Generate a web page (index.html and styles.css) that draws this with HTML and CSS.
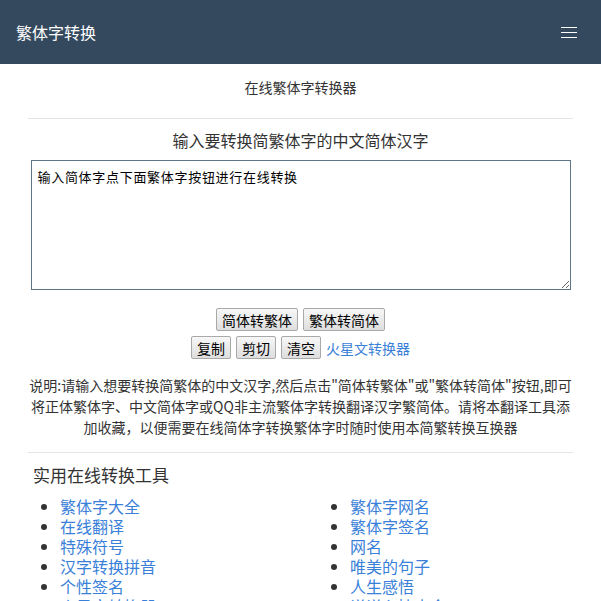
FILE: index.html
```html
<!DOCTYPE html>
<html lang="zh-CN">
    <head>
        <title>繁体字转换</title>
        <meta charset="utf-8">
        <meta name="viewport" content="width=device-width, initial-scale=1">
        <link rel="stylesheet" href="styles.css">
    </head>
    <body>
        <div class="navbar">
            <a class="brand" href="#">繁体字转换</a>
            <button class="toggle" type="button">
                <span></span>
                <span></span>
                <span></span>
            </button>
        </div>
        <div class="container">
            <div class="subtitle">在线繁体字转换器</div>
            <hr>
            <h3 class="title">输入要转换简繁体字的中文简体汉字</h3>
            <textarea class="input" id="content">输入简体字点下面繁体字按钮进行在线转换</textarea>
            <div class="actions">
                <div class="row">
                    <button class="btn" type="button">简体转繁体</button>
                    <button class="btn" type="button">繁体转简体</button>
                </div>
                <div class="row">
                    <button class="btn" type="button">复制</button>
                    <button class="btn" type="button">剪切</button>
                    <button class="btn" type="button">清空</button>
                    <a href="#">火星文转换器</a>
                </div>
            </div>
            <p class="desc">说明:请输入想要转换简繁体的中文汉字,然后点击"简体转繁体"或"繁体转简体"按钮,即可将正体繁体字、中文简体字或QQ非主流繁体字转换翻译汉字繁简体。请将本翻译工具添加收藏，以便需要在线简体字转换繁体字时随时使用本简繁转换互换器</p>
            <hr>
            <h4 class="tools-title">实用在线转换工具</h4>
            <ul class="tools">
                <li><a href="#">繁体字大全</a></li>
                <li><a href="#">繁体字网名</a></li>
                <li><a href="#">在线翻译</a></li>
                <li><a href="#">繁体字签名</a></li>
                <li><a href="#">特殊符号</a></li>
                <li><a href="#">网名</a></li>
                <li><a href="#">汉字转换拼音</a></li>
                <li><a href="#">唯美的句子</a></li>
                <li><a href="#">个性签名</a></li>
                <li><a href="#">人生感悟</a></li>
                <li><a href="#">火星文转换器</a></li>
                <li><a href="#">说说心情大全</a></li>
            </ul>
        </div>
    </body>
</html>
```

FILE: styles.css
```css
html, body {
    margin: 0;
    padding: 0;
    color: #333;
    background-color: #fff;
    font-family: "Noto Sans CJK SC", "Liberation Sans", sans-serif;
    font-size: 14px;
}

a {
    color: #3a7fd8;
    text-decoration: none;
}

.navbar {
    height: 64px;
    padding: 0 16px;
    display: flex;
    align-items: center;
    justify-content: space-between;
    background-color: #34495e;
}

.brand {
    color: #fff;
    font-size: 16px;
}

.toggle {
    width: 16px;
    padding: 0;
    margin-right: 8px;
    border: 0;
    background: none;
    display: flex;
    flex-direction: column;
    gap: 4px;
}

.toggle span {
    display: block;
    height: 1px;
    background-color: #fff;
}

.container {
    padding: 0 28px;
}

.subtitle {
    padding-top: 13px;
    line-height: 20px;
    text-align: center;
}

hr {
    margin: 21px 0 0;
    border: 0;
    border-top: 1px solid #e5e5e5;
}

.title {
    margin: 9px 0 8px;
    font-size: 16px;
    font-weight: normal;
    line-height: 24px;
    text-align: center;
}

.input {
    display: block;
    box-sizing: border-box;
    width: 540px;
    height: 130px;
    margin: 0 auto;
    padding: 6px;
    border: 1px solid #607585;
    font-family: "Noto Sans CJK SC", sans-serif;
    font-size: 13px;
    letter-spacing: 0.7px;
    color: #000;
    resize: both;
}

.actions {
    margin-top: 18px;
    display: flex;
    flex-direction: column;
    gap: 5px;
    align-items: center;
}

.row {
    display: flex;
    gap: 5px;
    align-items: center;
    height: 23px;
}

.btn {
    height: 23px;
    padding: 0 5px;
    border: 1px solid #a9a9a9;
    border-radius: 2px;
    background: linear-gradient(#f7f7f7, #dedede);
    font-family: "Noto Sans CJK SC", sans-serif;
    font-size: 14px;
    color: #000;
}

.desc {
    margin: 16px 0 0;
    line-height: 21px;
    text-align: center;
}

.desc + hr {
    margin-top: 14px;
}

.tools-title {
    margin: 10px 0 9px 5px;
    font-size: 17px;
    font-weight: normal;
    line-height: 24px;
}

.tools {
    margin: 0;
    padding-left: 32px;
    display: grid;
    grid-template-columns: 290px 1fr;
    font-size: 16px;
    line-height: 20px;
}
```
